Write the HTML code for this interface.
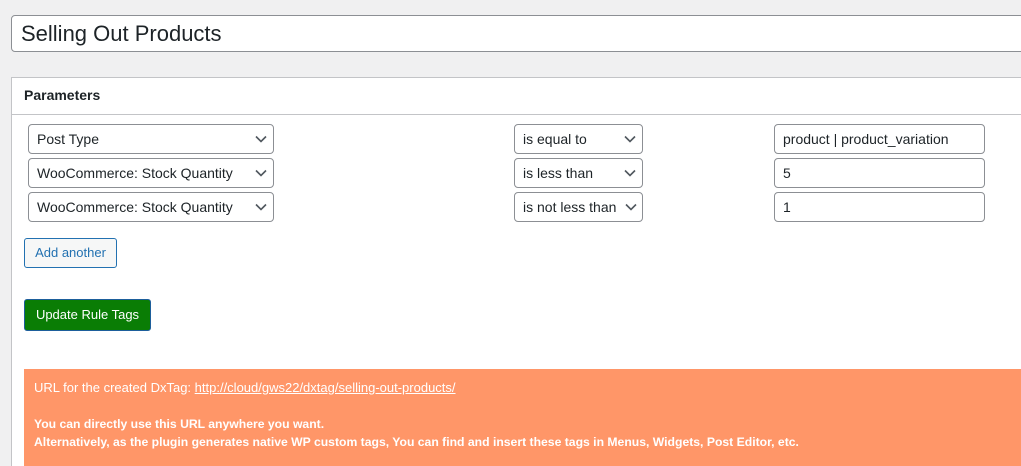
<!DOCTYPE html>
<html style="overflow:hidden;height:466px"><head><style>
body{margin:0;width:1021px;height:466px;background:#f0f0f1;font-family:"Liberation Sans",sans-serif;overflow:hidden;position:relative;color:#1d2327}
.t{position:absolute;left:11px;top:15px;width:1020px;height:37px;background:#fff;border:1px solid #8c8f94;border-radius:4px;box-sizing:border-box;font-size:22px;line-height:35px;padding-left:9px}
.p{position:absolute;left:11px;top:77px;width:1020px;height:389px;background:#fff;border:1px solid #c3c4c7;border-bottom:none;box-sizing:border-box}
.h{position:absolute;left:11px;top:77px;width:1020px;height:38px;border-bottom:1px solid #c3c4c7;box-sizing:border-box;font-weight:bold;font-size:14px;line-height:36px;padding-left:13px}
.s{position:absolute;height:30px;background:#fff;border:1px solid #8c8f94;border-radius:4px;box-sizing:border-box;font-size:14px;line-height:28px;padding-left:8px;white-space:nowrap;overflow:hidden}
.s svg{position:absolute;right:6px;top:10px}
.b1{position:absolute;left:24px;top:238px;width:93px;height:30px;border:1px solid #2271b1;border-radius:3px;background:#f6f7f7;color:#2271b1;font-size:13px;line-height:28px;text-align:center;box-sizing:border-box}
.b2{position:absolute;left:24px;top:299px;width:127px;height:32px;border:1px solid #1d5e9b;border-radius:3px;background:#0a7d05;color:#fff;font-size:13px;line-height:30px;text-align:center;box-sizing:border-box}
.o{position:absolute;left:24px;top:369px;width:1000px;height:97px;background:#ff9668;color:#fff;font-size:13px;padding:10px 10px;box-sizing:border-box;line-height:18px}
.o a{color:#fff}
.o b{font-size:12.2px}
</style></head><body>
<div class="t">Selling Out Products</div>
<div class="p"></div>
<div class="h">Parameters</div>
<svg width="0" height="0" style="position:absolute"><defs><symbol id="c" viewBox="0 0 12 8"><path d="M1 1.5L6 6.5L11 1.5" fill="none" stroke="#50575e" stroke-width="1.6"/></symbol></defs></svg>
<div class="s" style="left:28px;top:124px;width:246px">Post Type<svg width="12" height="8"><use href="#c"/></svg></div>
<div class="s" style="left:28px;top:158px;width:246px">WooCommerce: Stock Quantity<svg width="12" height="8"><use href="#c"/></svg></div>
<div class="s" style="left:28px;top:192px;width:246px">WooCommerce: Stock Quantity<svg width="12" height="8"><use href="#c"/></svg></div>
<div class="s" style="left:514px;top:124px;width:129px">is equal to<svg width="12" height="8"><use href="#c"/></svg></div>
<div class="s" style="left:514px;top:158px;width:129px">is less than<svg width="12" height="8"><use href="#c"/></svg></div>
<div class="s" style="left:514px;top:192px;width:129px;padding-right:20px">is not less than<svg width="12" height="8" style="right:5px;background:#fff"><use href="#c"/></svg></div>
<div class="s" style="left:774px;top:124px;width:211px">product | product_variation</div>
<div class="s" style="left:774px;top:158px;width:211px">5</div>
<div class="s" style="left:774px;top:192px;width:211px">1</div>
<div class="b1">Add another</div>
<div class="b2">Update Rule Tags</div>
<div class="o">URL for the created DxTag: <a href="#">http://cloud/gws22/dxtag/selling-out-products/</a><br><br><b>You can directly use this URL anywhere you want.<br>Alternatively, as the plugin generates native WP custom tags, You can find and insert these tags in Menus, Widgets, Post Editor, etc.</b></div>
</body></html>
